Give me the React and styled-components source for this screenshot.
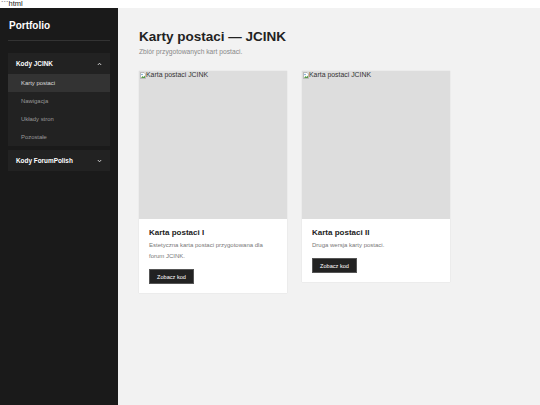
import React, { useState } from 'react';
import styled, { createGlobalStyle } from 'styled-components';

const groups = [
  { name: 'Kody JCINK', items: ['Karty postaci', 'Nawigacja', 'Układy stron', 'Pozostałe'] },
  { name: 'Kody ForumPolish', items: [] },
];

const cards = [
  { title: 'Karta postaci I', text: 'Estetyczna karta postaci przygotowana dla forum JCINK.' },
  { title: 'Karta postaci II', text: 'Druga wersja karty postaci.' },
];

function Chevron({ up }) {
  return (
    <svg width="5" height="4" viewBox="0 0 5 4">
      <path d={up ? 'M0.8 3 L2.5 1.2 L4.2 3' : 'M0.8 1 L2.5 2.8 L4.2 1'} fill="none" stroke="#ddd" strokeWidth="0.9" />
    </svg>
  );
}

function BrokenIcon() {
  return (
    <svg width="6" height="7" viewBox="0 0 6 7">
      <path d="M0.5 0.5 H4 L5.5 2 V6.5 H0.5 Z" fill="#fff" stroke="#999" strokeWidth="0.6" />
      <path d="M1 6 L2.5 4 L3.5 5 L5 3.5 V6 Z" fill="#5a9c4a" />
      <circle cx="2" cy="2.5" r="0.7" fill="#4a86c8" />
    </svg>
  );
}

function App() {
  const [open, setOpen] = useState('Kody JCINK');

  return (
    <>
      <GlobalStyle />
      <Raw>```html</Raw>
      <Layout>
        <Sidebar>
          <Logo>Portfolio</Logo>
          <Nav>
            {groups.map((g) => (
              <Group key={g.name}>
                <GroupHead onClick={() => setOpen(open === g.name ? '' : g.name)}>
                  {g.name}
                  <Chevron up={open === g.name} />
                </GroupHead>
                {open === g.name && g.items.map((item, i) => (
                  <NavItem key={item} $active={i === 0}>{item}</NavItem>
                ))}
              </Group>
            ))}
          </Nav>
        </Sidebar>

        <Main>
          <Title>Karty postaci — JCINK</Title>
          <Subtitle>Zbiór przygotowanych kart postaci.</Subtitle>
          <CardGrid>
            {cards.map((c) => (
              <Card key={c.title}>
                <Thumb>
                  <Alt><BrokenIcon />Karta postaci JCINK</Alt>
                </Thumb>
                <CardBody>
                  <CardTitle>{c.title}</CardTitle>
                  <CardText>{c.text}</CardText>
                  <CodeButton>Zobacz kod</CodeButton>
                </CardBody>
              </Card>
            ))}
          </CardGrid>
        </Main>
      </Layout>
    </>
  );
}

// ---------- styles ----------
const GlobalStyle = createGlobalStyle`
  html, body { margin: 0; padding: 0; background: #f2f2f2; }
  body { font-family: "Liberation Sans", Arial, sans-serif; }
`;

const Raw = styled.div`
  height: 8px;
  font-size: 7.5px;
  line-height: 7px;
  color: #222;
  background: #fff;
  padding-left: 1px;
`;

const Layout = styled.div`
  display: flex;
  min-height: 397px;
`;

const Sidebar = styled.aside`
  width: 118px;
  flex-shrink: 0;
  background: #1a1a1a;
  padding: 0 8px;
  box-sizing: border-box;
`;

const Logo = styled.div`
  color: #fff;
  font-size: 10px;
  font-weight: bold;
  padding: 12px 0 9px 1px;
  border-bottom: 1px solid #333;
`;

const Nav = styled.nav`
  display: flex;
  flex-direction: column;
  gap: 4px;
  margin-top: 12px;
`;

const Group = styled.div`
  background: #222;
  display: flex;
  flex-direction: column;
`;

const GroupHead = styled.div`
  height: 21px;
  display: flex;
  align-items: center;
  justify-content: space-between;
  padding: 0 8px;
  color: #fff;
  font-size: 6.4px;
  font-weight: bold;
  cursor: pointer;
`;

const NavItem = styled.div`
  height: 18px;
  display: flex;
  align-items: center;
  padding-left: 13px;
  font-size: 5.9px;
  color: ${(p) => (p.$active ? '#ddd' : '#999')};
  background: ${(p) => (p.$active ? '#333' : 'transparent')};
`;

const Main = styled.main`
  flex: 1;
  padding: 21px 21px;
`;

const Title = styled.h1`
  margin: 0;
  font-size: 13.5px;
  line-height: 16px;
  color: #222;
`;

const Subtitle = styled.p`
  margin: 2px 0 0;
  font-size: 6.7px;
  line-height: 9px;
  color: #888;
`;

const CardGrid = styled.div`
  display: grid;
  grid-template-columns: 148px 148px;
  gap: 15px;
  align-items: start;
  margin-top: 15px;
`;

const Card = styled.div`
  background: #fff;
  box-shadow: 0 0 1px rgba(0, 0, 0, 0.15);
`;

const Thumb = styled.div`
  height: 148px;
  background: #ddd;
`;

const Alt = styled.span`
  display: flex;
  align-items: center;
  font-size: 6.9px;
  line-height: 8px;
  color: #333;
  padding: 0 0 0 1px;
`;

const CardBody = styled.div`
  padding: 9px 10px 9px;
`;

const CardTitle = styled.h3`
  margin: 0 0 2px;
  font-size: 8px;
  line-height: 10px;
  color: #222;
`;

const CardText = styled.p`
  margin: 0 0 7px;
  font-size: 6px;
  line-height: 11px;
  color: #777;
`;

const CodeButton = styled.button`
  display: block;
  height: 15px;
  padding: 0 7px;
  border: 1px solid #555;
  background: #222;
  color: #fff;
  font-family: inherit;
  font-size: 5.6px;
  cursor: pointer;
`;

export default App;
